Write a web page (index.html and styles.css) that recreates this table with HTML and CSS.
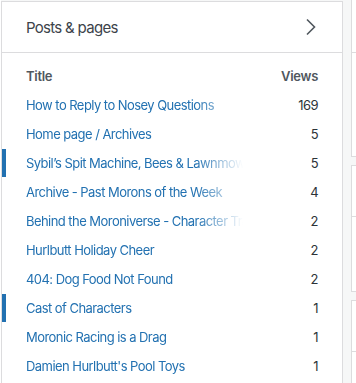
FILE: index.html
```html
<!DOCTYPE html>
<html lang="en">
<head>
<meta charset="utf-8">
<title>Posts &amp; pages</title>
<link rel="stylesheet" href="styles.css">
</head>
<body>
<div class="layout">
  <section class="card main">
    <header class="card-header">
      <h2 class="card-title">Posts &amp; pages</h2>
      <svg class="chevron" width="24" height="24" viewBox="0 0 24 24" aria-hidden="true">
        <path d="M9 4.5 L16.5 12 L9 19.5" fill="none" stroke="#50575e" stroke-width="1.6"/>
      </svg>
    </header>
    <div class="table">
      <div class="row head"><span class="title">Title</span><span class="views">Views</span></div>
      <div class="row"><span class="title"><a>How to Reply to Nosey Questions</a></span><span class="views">169</span></div>
      <div class="row"><span class="title"><a>Home page / Archives</a></span><span class="views">5</span></div>
      <div class="row marked"><span class="title"><a>Sybil’s Spit Machine, Bees &amp; Lawnmower Racing</a></span><span class="views">5</span></div>
      <div class="row"><span class="title"><a>Archive - Past Morons of the Week</a></span><span class="views">4</span></div>
      <div class="row"><span class="title"><a>Behind the Moroniverse - Character Traits</a></span><span class="views">2</span></div>
      <div class="row"><span class="title"><a>Hurlbutt Holiday Cheer</a></span><span class="views">2</span></div>
      <div class="row"><span class="title"><a>404: Dog Food Not Found</a></span><span class="views">2</span></div>
      <div class="row marked"><span class="title"><a>Cast of Characters</a></span><span class="views">1</span></div>
      <div class="row"><span class="title"><a>Moronic Racing is a Drag</a></span><span class="views">1</span></div>
      <div class="row"><span class="title"><a>Damien Hurlbutt's Pool Toys</a></span><span class="views">1</span></div>
    </div>
  </section>
  <aside class="side">
    <div class="card side-card first"><div class="side-head"></div><div class="side-body b1"></div></div>
    <div class="card side-card"><div class="side-head"></div><div class="side-body b2"></div></div>
    <div class="card side-card"><div class="side-head"></div><div class="side-body b3"></div></div>
  </aside>
</div>
</body>
</html>
```
FILE: styles.css
```css
html, body {
  margin: 0;
  padding: 0;
  background: #f6f7f7;
  overflow: hidden;
}
body {
  font-family: Inter, "Noto Sans", sans-serif;
  width: 356px;
  height: 383px;
  border-left: 1px solid #fff;
  box-sizing: border-box;
}
.layout {
  display: flex;
  gap: 8px;
  align-items: flex-start;
  padding-top: 1px;
}
.card {
  background: #fff;
  border: 1px solid #dcdcde;
  box-sizing: border-box;
}
.main {
  width: 342px;
  flex: none;
  height: 400px;
}
.card-header {
  height: 50px;
  border-bottom: 1px solid #dcdcde;
  display: flex;
  align-items: center;
  justify-content: space-between;
  padding: 0 20px 0 24px;
}
.card-title {
  margin: 0;
  font-size: 15px;
  font-weight: 400;
  color: #3c434a;
  letter-spacing: -0.7px;
}
.chevron {
  display: block;
}
.table {
  padding-top: 8px;
}
.row {
  position: relative;
  height: 29px;
  display: flex;
  align-items: center;
  justify-content: space-between;
  padding: 0 24px;
  font-size: 13px;
  letter-spacing: -0.55px;
}
.row.marked::before {
  content: "";
  position: absolute;
  left: 0;
  top: 1px;
  width: 4px;
  height: 28px;
  background: #2271b1;
}
.title {
  width: 217px;
  white-space: nowrap;
  overflow: hidden;
  -webkit-mask-image: linear-gradient(to right, #000 78%, transparent 100%);
  mask-image: linear-gradient(to right, #000 78%, transparent 100%);
}
.title a {
  color: #2271b1;
  text-decoration: none;
}
.views {
  color: #2c3338;
  text-align: right;
}
.head .title,
.head .views {
  font-weight: 600;
  color: #50575e;
  letter-spacing: -0.3px;
  -webkit-mask-image: none;
  mask-image: none;
}
.side {
  display: flex;
  flex-direction: column;
  gap: 8px;
  width: 200px;
  flex: none;
}
.side-card.first {
  margin-top: -2px;
}
.side-head {
  height: 50px;
  border-bottom: 1px solid #dcdcde;
}
.side-card.first .side-head {
  height: 52px;
}
.b1 { height: 103px; }
.b2 { height: 74px; }
.b3 { height: 100px; }
```
